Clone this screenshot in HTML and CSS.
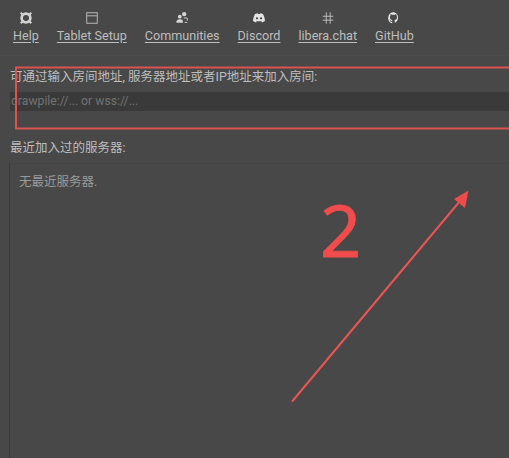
FILE: index.html
```html
<!DOCTYPE html>
<html lang="zh">
<head>
<meta charset="utf-8">
<title>Join</title>
<link rel="stylesheet" href="styles.css">
</head>
<body>
<nav class="links">
  <a class="link link-help" href="#">
    <svg class="icon" viewBox="0 0 16 16"><circle cx="8" cy="8" r="5" fill="none" stroke="#d4d4d4" stroke-width="3"/><path d="M2 2l3 3M14 2l-3 3M2 14l3-3M14 14l-3-3" stroke="#d4d4d4" stroke-width="2.4"/></svg>
    <span>Help</span></a>
  <a class="link link-tablet" href="#">
    <svg class="icon" viewBox="0 0 16 16"><rect x="2" y="2" width="12" height="12" fill="none" stroke="#bbb" stroke-width="1.1"/><path d="M2.500 5.500h11" stroke="#bbb" stroke-width="1.1"/></svg>
    <span>Tablet Setup</span></a>
  <a class="link link-comm" href="#">
    <svg class="icon" viewBox="0 0 16 16"><circle cx="10.500" cy="3.500" r="2.500" fill="#d4d4d4"/><circle cx="5.500" cy="6.500" r="2.200" fill="#d4d4d4"/><path d="M1.500 13.500c0-3 1.500-4 4-4s3.500 1 3.500 2.500v1.500z" fill="#d4d4d4"/><path d="M10 8h4v3M11 13h3" stroke="#d4d4d4" fill="none"/></svg>
    <span>Communities</span></a>
  <a class="link link-discord" href="#">
    <svg class="icon" viewBox="0 0 16 16"><path d="M3.500 3.500C5 2.800 6 2.600 6.500 2.600L7 3.500h2l.5-.9c.6 0 1.600.2 3 .9C14 6 14.800 8.800 14.800 11.500c-1 .8-2.200 1.300-3.300 1.500l-.8-1.200-.1-.1H5.400l-.1.1-.8 1.200c-1.100-.2-2.300-.7-3.300-1.500C1.200 8.800 2 6 3.500 3.500z" fill="#e4e4e4"/><circle cx="5.700" cy="8.300" r="1.300" fill="#484848"/><circle cx="10.300" cy="8.300" r="1.300" fill="#484848"/></svg>
    <span>Discord</span></a>
  <a class="link link-libera" href="#">
    <svg class="icon" viewBox="0 0 16 16"><path d="M6 1.500v13M10.500 1.500v13M2 6h12M2 10.500h12" stroke="#bdbdbd" stroke-width="1.100" fill="none"/></svg>
    <span>libera.chat</span></a>
  <a class="link link-github" href="#">
    <svg class="icon" viewBox="0 0 16 16"><path d="M8 1.500a6.500 6.500 0 0 0-2.100 12.700v-2c-1.800.4-2.200-.8-2.200-.8-.3-.8-.7-1-.7-1-.6-.4 0-.4 0-.4.700 0 1 .7 1 .7.600 1 1.500.7 1.900.5 0-.4.200-.7.400-.9-1.500-.2-3-.7-3-3.200 0-.7.300-1.300.7-1.700-.1-.2-.3-.8 0-1.700 0 0 .6-.2 1.800.7a6 6 0 0 1 3.200 0c1.200-.9 1.800-.7 1.800-.7.300.9.100 1.500 0 1.700.4.400.7 1 .7 1.700 0 2.500-1.500 3-3 3.200.2.200.4.600.4 1.200v2.100A6.500 6.500 0 0 0 8 1.500z" fill="#e8e8e8"/></svg>
    <span>GitHub</span></a>
</nav>
<main class="content">
  <label class="caption caption-join">可通过输入房间地址, 服务器地址或者IP地址来加入房间:</label>
  <div class="address">drawpile://... or wss://...</div>
  <label class="caption caption-recent">最近加入过的服务器:</label>
  <div class="recent"><p class="empty">无最近服务器.</p></div>
</main>
<svg class="annotation" viewBox="0 0 509 458" width="509" height="458">
  <rect class="mark-box" x="16" y="67.500" width="500" height="61"/>
  <line class="mark-line" x1="292.500" y1="401" x2="460" y2="201"/>
  <polygon class="mark-head" points="468.500,190.500 465,208 454,199"/>
  <text class="mark-num" x="340.500" y="257" text-anchor="middle">2</text>
</svg>
</body>
</html>
```
FILE: styles.css
```css
html, body {
  margin: 0;
  padding: 0;
}
body {
  position: relative;
  width: 509px;
  height: 458px;
  overflow: hidden;
  background: #484848;
  color: #bdbdbd;
  font-family: Roboto, "Noto Sans CJK SC", sans-serif;
  font-size: 12.500px;
}
.links {
  display: flex;
  height: 56px;
  box-sizing: border-box;
  padding: 11px 0 0 13px;
  gap: 18px;
  border-bottom: 1px solid #504c4a;
}
.link {
  display: flex;
  flex-direction: column;
  align-items: center;
  gap: 2px;
  color: #bdbdbd;
  font-size: 12.600px;
  line-height: 17px;
  text-decoration: underline;
  text-underline-offset: 1.500px;
}
.icon {
  width: 14px;
  height: 14px;
}
.content {
  display: flex;
  flex-direction: column;
  padding-left: 10px;
}
.caption {
  font-size: 12.500px;
  line-height: 16px;
  color: #bdbdbd;
}
.caption-join {
  margin-top: 13px;
}
.address {
  margin-top: 7px;
  height: 19px;
  line-height: 19px;
  padding-left: 1px;
  background: #3a3a3a;
  color: #727272;
  font-size: 12.200px;
}
.caption-recent {
  margin-top: 29px;
}
.recent {
  box-sizing: border-box;
  margin: 7px 0 0 -1px;
  height: 295px;
  border-left: 1px solid #3a3a3a;
  border-top: 1px solid #444;
  padding: 10px 9px;
}
.empty {
  margin: 0;
  font-size: 12.500px;
  line-height: 16px;
  color: #9a9a9a;
}
.annotation {
  position: absolute;
  left: 0;
  top: 0;
  pointer-events: none;
}
.mark-box {
  fill: none;
  stroke: #d9534f;
  stroke-width: 2;
}
.mark-line {
  stroke: #e85552;
  stroke-width: 2;
  stroke-linecap: round;
}
.mark-head {
  fill: #ee4c4c;
}
.mark-num {
  fill: #f04c4c;
  stroke: #f04c4c;
  stroke-width: 0.800px;
  font-family: "Noto Sans", sans-serif;
  font-size: 72px;
  font-weight: 400;
}
```
